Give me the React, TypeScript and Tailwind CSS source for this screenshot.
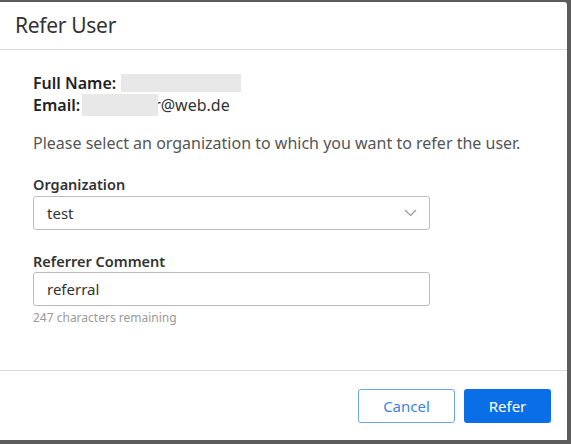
export default function App() {
  return (
    <div
      className="h-[444px] w-[571px] overflow-hidden bg-[#5c5c5c]"
      style={{ fontFamily: '"Noto Sans", "Open Sans", sans-serif' }}
    >
      <div className="mt-[2px] flex h-[438px] w-[567px] flex-col rounded-tr-[3px] bg-white">
        {/* header */}
        <div className="flex h-[48px] shrink-0 items-center border-b border-[#dcdcdc] px-[15px]">
          <h1 className="text-[21px] leading-none tracking-[-0.3px] text-[#333]">Refer User</h1>
        </div>

        {/* body */}
        <div className="flex-1 pl-[33px] pr-[40px] pt-[22px]">
          <div className="flex h-[22px] items-center text-[16px] font-semibold text-[#222]">
            <span>Full Name:</span>
            <span className="ml-[5px] inline-block h-[18px] w-[120px] bg-[#e8e8e8]" />
          </div>
          <div className="flex h-[22px] items-center text-[16px] text-[#222]">
            <span className="font-semibold">Email:</span>
            <span className="relative z-10 -mr-[4px] ml-[2px] inline-block h-[22px] w-[76px] bg-[#e8e8e8]" />
            <span className="text-[#333]">r@web.de</span>
          </div>

          <p className="mt-[16px] text-[16px] leading-[22px] text-[#555]">
            Please select an organization to which you want to refer the user.
          </p>

          <label className="mt-[20px] block text-[14.5px] font-semibold leading-[20px] text-[#333]">
            Organization
          </label>
          <div className="mt-[2px] flex h-[34px] w-[397px] items-center justify-between rounded-[3px] border border-[#bdbdbd] pl-[13px] pr-[12px] text-[15px] text-[#333]">
            <span>test</span>
            <svg width="13" height="8" viewBox="0 0 13 8" fill="none">
              <path d="M1 1l5.5 5.5L12 1" stroke="#9a9a9a" strokeWidth="1.2" />
            </svg>
          </div>

          <label className="mt-[21px] block text-[14.5px] font-semibold leading-[20px] text-[#333]">
            Referrer Comment
          </label>
          <div className="mt-[1px] flex h-[34px] w-[397px] items-center rounded-[3px] border border-[#bdbdbd] pl-[13px] text-[15px] text-[#333]">
            referral
          </div>
          <div className="mt-[4px] text-[12px] leading-[16px] text-[#9a9a9a]">
            247 characters remaining
          </div>
        </div>

        {/* footer */}
        <div className="flex h-[70px] shrink-0 items-start justify-end gap-[9px] border-t border-[#dcdcdc] pr-[16px] pt-[18px]">
          <button className="h-[34px] w-[97px] rounded-[3px] border border-[#6aa6ee] text-[15px] text-[#3d82dc]">
            Cancel
          </button>
          <button className="h-[34px] w-[87px] rounded-[3px] bg-[#0a6fe6] text-[15px] text-white">
            Refer
          </button>
        </div>
      </div>
    </div>
  );
}
